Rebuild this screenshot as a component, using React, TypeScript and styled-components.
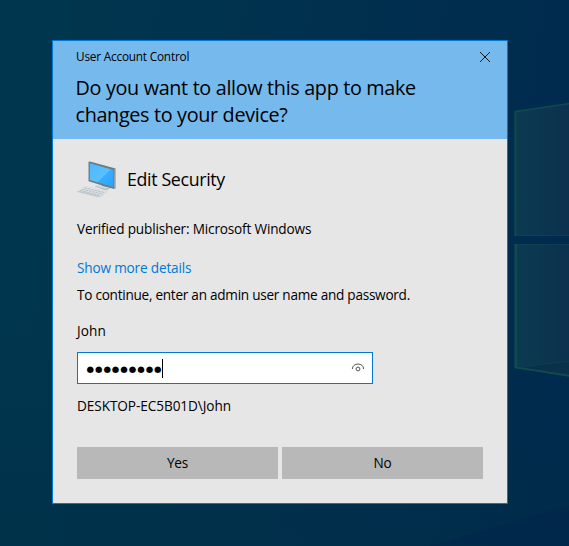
import React from "react";
import styled, { createGlobalStyle } from "styled-components";

const GlobalStyle = createGlobalStyle`
  html, body { margin: 0; padding: 0; }
  body { overflow: hidden; }
  * { box-sizing: border-box; }
`;

const Desktop = styled.main`
  position: relative;
  width: 569px;
  height: 546px;
  padding: 40px 0 0 52px;
  overflow: hidden;
  background: linear-gradient(97deg, #00374e 0%, #00334e 35%, #002e4e 65%, #002a4f 100%);
  font-family: "Open Sans", "Noto Sans", sans-serif;
  color: #000;
`;

const Wallpaper = styled.svg`
  position: absolute;
  inset: 0;
`;

const Dialog = styled.section`
  position: relative;
  display: flex;
  flex-direction: column;
  width: 456px;
  height: 464px;
  border: 1px solid #0078d7;
  background: #e6e6e6;
`;

const Header = styled.header`
  height: 98px;
  padding: 6px 16px 0 23px;
  background: #76b9ed;
`;

const TitleBar = styled.div`
  display: flex;
  justify-content: space-between;
  align-items: center;
  height: 20px;
`;

const Text = styled.div<{ $size?: number; $line?: number; $track?: number }>`
  font-size: ${(p) => p.$size ?? 13.6}px;
  line-height: ${(p) => p.$line ?? 20}px;
  letter-spacing: ${(p) => p.$track ?? 0}px;
  white-space: nowrap;
`;

const Caption = styled(Text)`
  padding-bottom: 2px;
`;

const Heading = styled.h1`
  margin: 7px 0 0 -0.5px;
  font-size: 19.8px;
  font-weight: 400;
  line-height: 27px;
  white-space: nowrap;
`;

const HeadingLine = styled.span<{ $track: number }>`
  display: block;
  letter-spacing: ${(p) => p.$track}px;
`;

const IconButton = styled.button`
  display: flex;
  padding: 0;
  border: 0;
  background: transparent;
`;

const Body = styled.div`
  display: flex;
  flex-direction: column;
  padding: 20px 24px 0;
`;

const AppRow = styled.div`
  display: flex;
  align-items: center;
  gap: 10px;
  height: 40px;
  margin-bottom: 20px;
`;

const Link = styled(Text).attrs({ as: "a" })`
  margin: 19px 0 7px;
  color: #0078d7;
`;

const UserName = styled(Text)`
  margin: 16px 0 11px;
`;

const PasswordField = styled.div`
  display: flex;
  align-items: center;
  width: 296px;
  height: 32px;
  padding: 0 7px 0 8.5px;
  border: 1px solid #0078d7;
  background: #fff;
`;

const Dots = styled.span`
  width: 75.5px;
  padding-top: 1px;
  font-family: "DejaVu Sans", sans-serif;
  font-size: 8.6px;
  line-height: 18px;
  letter-spacing: 0.95px;
  white-space: nowrap;
`;

const Caret = styled.span`
  width: 1px;
  height: 19px;
  margin-right: auto;
  background: #000;
`;

const Account = styled(Text)`
  margin: 12px 0 31px;
`;

const Actions = styled.div`
  display: grid;
  grid-template-columns: 1fr 1fr;
  gap: 4px;
`;

const ActionButton = styled.button`
  height: 32px;
  padding: 0;
  border: 0;
  background: #b8b8b8;
  color: #000;
  font: 13.6px/32px "Open Sans", "Noto Sans", sans-serif;
  letter-spacing: -0.2px;
`;

const WindowsLight = () => (
  <Wallpaper width="569" height="546" viewBox="0 0 569 546" aria-hidden="true">
    <defs>
      <linearGradient id="pane" x1="0" x2="1">
        <stop offset="0" stopColor="#0b3b50" />
        <stop offset="1" stopColor="#0b314f" />
      </linearGradient>
      <linearGradient id="shade" x1="0" x2="0" y1="0" y2="1">
        <stop offset="0.6" stopColor="#002a45" stopOpacity="0" />
        <stop offset="1" stopColor="#002f47" stopOpacity="0.5" />
      </linearGradient>
    </defs>
    <rect width="569" height="546" fill="url(#shade)" />
    <path d="M430 546 569 505V546Z" fill="#002449" opacity=".5" />
    <path d="M514 111.5 570 103.5V236H514Z" fill="url(#pane)" />
    <path d="M514 244H570V376L514 368Z" fill="url(#pane)" />
    <path d="M516 367 570 361V376Z" fill="#0a304a" />
    <g fill="none" stroke="#12504f">
      <path d="M515.5 236V111.5L570 103.5" strokeWidth="1.6" opacity=".75" />
      <path d="M514 235.5H570M514 244.5H570" opacity=".35" />
      <path d="M516 244V367.5L570 376" strokeWidth="2" opacity=".85" />
      <path d="M516 367.5 570 361" opacity=".5" />
    </g>
  </Wallpaper>
);

const CloseIcon = () => (
  <svg width="12" height="12" viewBox="0 0 12 12">
    <path d="M1 1 11 11M11 1 1 11" stroke="#111" strokeWidth="1" />
  </svg>
);

const ComputerIcon = () => (
  <svg width="40" height="40" viewBox="0 0 40 40">
    <defs>
      <linearGradient id="screen" x1="0" y1="0" x2="1" y2="1">
        <stop offset="0" stopColor="#4bb9ff" />
        <stop offset="0.55" stopColor="#5ac0ff" />
        <stop offset="0.58" stopColor="#38aeff" />
        <stop offset="1" stopColor="#29a2fa" />
      </linearGradient>
    </defs>
    <path d="M17.5 27.5 24 25.2 35 28.3 29 31.2Z" fill="#aeb8bf" />
    <path d="M18 27 24 25.5 33 28 28.5 29.8Z" fill="#d6dde1" />
    <path d="M25 24 31 25.5V28.3L25 27Z" fill="#89959d" />
    <path d="M11.5 2.8 13 2.6 38.6 9.6V29.3L37 30 11.5 22.2Z" fill="#6e7b83" />
    <path d="M37.6 10 38.6 10.3V29.3L37.4 29.6Z" fill="#b8c0c5" />
    <path d="M12.8 4.2 36.4 11V28L12.8 21Z" fill="url(#screen)" />
    <path d="M.5 32.2 8.5 27.2 30.5 32.4 23.8 37.6 20.5 38 .5 33Z" fill="#bcc5ca" />
    <path d="M.8 31.8 8.5 27.2 30 32.4 23 36.9Z" fill="#dde3e7" />
    <g fill="none" stroke="#a8b2b9" strokeWidth=".8" strokeDasharray="2.6 .9">
      <path d="M7.2 28.8 27.5 33.6" />
      <path d="M5 30.3 25.5 35" />
      <path d="M3 31.6 22.5 36.1" />
    </g>
  </svg>
);

const RevealIcon = () => (
  <svg width="14" height="12" viewBox="0 0 14 12" fill="none" stroke="#555">
    <path d="M1.3 7C1.5 3.8 4 2 7 2S12.5 3.8 12.7 7" />
    <circle cx="7" cy="7" r="1.9" />
  </svg>
);

export default function App() {
  return (
    <Desktop>
      <GlobalStyle />
      <WindowsLight />
      <Dialog role="dialog">
        <Header>
          <TitleBar>
            <Caption $size={11.8} $track={-0.2}>User Account Control</Caption>
            <IconButton aria-label="Close"><CloseIcon /></IconButton>
          </TitleBar>
          <Heading>
            <HeadingLine $track={-0.33}>Do you want to allow this app to make</HeadingLine>
            <HeadingLine $track={-0.33}>changes to your device?</HeadingLine>
          </Heading>
        </Header>
        <Body>
          <AppRow>
            <ComputerIcon />
            <Text $size={17.8} $line={24} $track={-0.35}>Edit Security</Text>
          </AppRow>
          <Text $track={-0.17}>Verified publisher: Microsoft Windows</Text>
          <Link $track={-0.17}>Show more details</Link>
          <Text $track={-0.265}>To continue, enter an admin user name and password.</Text>
          <UserName $track={0.1}>John</UserName>
          <PasswordField>
            <Dots>●●●●●●●●●</Dots>
            <Caret />
            <IconButton aria-label="Reveal password"><RevealIcon /></IconButton>
          </PasswordField>
          <Account $track={-0.07}>DESKTOP-EC5B01D\John</Account>
          <Actions>
            <ActionButton>Yes</ActionButton>
            <ActionButton>No</ActionButton>
          </Actions>
        </Body>
      </Dialog>
    </Desktop>
  );
}
